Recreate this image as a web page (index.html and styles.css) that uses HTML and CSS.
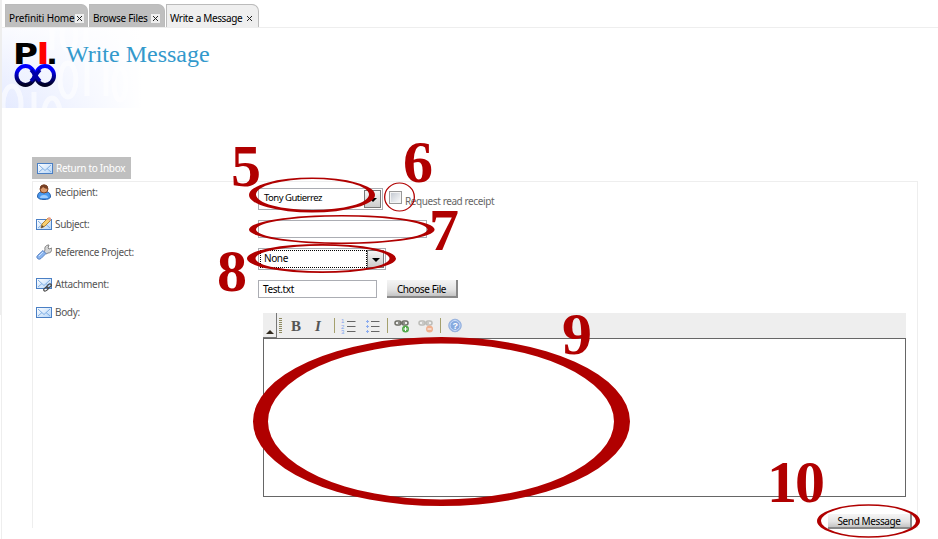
FILE: index.html
```html
<!DOCTYPE html>
<html lang="en">
<head>
<meta charset="utf-8">
<title>Write a Message</title>
<link rel="stylesheet" href="styles.css">
</head>
<body>
<svg class="defs" width="0" height="0">
  <defs>
    <linearGradient id="sky" x1="0" y1="0" x2="1" y2="1"><stop offset="0" stop-color="#fff"/><stop offset="1" stop-color="#b5d5f8"/></linearGradient>
    <linearGradient id="loop" x1="0" y1="0" x2="0" y2="1"><stop offset=".2" stop-color="#00f"/><stop offset="1" stop-color="#000020"/></linearGradient>
    <symbol id="mail" viewBox="0 0 16 16"><rect x=".5" y="3.5" width="15" height="10" fill="url(#sky)" stroke="#4a7fc4"/><path d="M2 5l6 5.5L14 5M2 12l4-3.5M14 12l-4-3.5" fill="none" stroke="#80afe4"/></symbol>
  </defs>
</svg>
<div class="window">
  <nav class="tabs">
    <div class="tab home"><span>Prefiniti Home</span><svg class="close" viewBox="0 0 9 9"><path d="M2 2l5 5M7 2L2 7"/></svg></div>
    <div class="tab files"><span>Browse Files</span><svg class="close" viewBox="0 0 9 9"><path d="M2 2l5 5M7 2L2 7"/></svg></div>
    <div class="tab active"><span>Write a Message</span><svg class="close" viewBox="0 0 9 9"><path d="M2 2l5 5M7 2L2 7"/></svg></div>
  </nav>
  <header class="banner">
    <svg class="binary" width="150" height="80" viewBox="0 0 150 80"><g fill="none" stroke="#fff" stroke-width="5"><ellipse cx="66" cy="52" rx="8" ry="17"/><path d="M85 34v34M104 34v34"/><ellipse cx="118" cy="56" rx="6" ry="16"/><ellipse cx="10" cy="76" rx="9" ry="18"/><path d="M32 64v20"/><ellipse cx="50" cy="86" rx="8" ry="16"/><path d="M50 0v22M84 0v24"/><ellipse cx="67" cy="8" rx="7" ry="14"/></g></svg>
    <svg class="logo" width="44" height="50" viewBox="0 0 44 50">
      <g class="logo-text"><text x="-1" y="22.500" textLength="25" lengthAdjust="spacingAndGlyphs">P</text><text class="red" x="22.500" y="22.500" textLength="13" lengthAdjust="spacingAndGlyphs">l</text><text x="32" y="22.500" textLength="12" lengthAdjust="spacingAndGlyphs">.</text></g>
      <g fill="none" stroke="url(#loop)" stroke-width="4"><ellipse cx="11.500" cy="34.500" rx="9" ry="9.500"/><ellipse cx="31" cy="34.500" rx="9" ry="9.500"/></g>
      <path d="M17 29l9 11M26 29l-9 11" stroke="#0000a8" stroke-width="3.500"/>
    </svg>
    <h1>Write Message</h1>
  </header>
  <main>
    <a class="return"><svg width="16" height="16"><use href="#mail"/></svg><span>Return to Inbox</span></a>
    <form class="panel">
      <div class="row r1">
        <div class="label"><svg width="16" height="16" viewBox="0 0 16 16"><path d="M1.5 13q0-5 4-5h5q4 0 4 5-1 2.500-6.500 2.500T1.500 13z" fill="#4898ee" stroke="#295fa8"/><path d="M4 14q0-3 4-3t4 3z" fill="#9dccff"/><circle cx="8" cy="5" r="4" fill="#dc9b6e" stroke="#7b4326"/><path d="M4 5q0-4.500 4-4.500T12 5Q9 5 7 3 6 5 4 5z" fill="#774025"/></svg><span>Recipient:</span></div>
        <div class="control"><div class="select rec"><span>Tony Gutierrez</span><i class="arrow"></i></div><i class="check"></i><span class="receipt">Request read receipt</span></div>
      </div>
      <div class="row r2">
        <div class="label"><svg width="16" height="16" viewBox="0 0 16 16"><use href="#mail"/><path d="M5 12l1-4 6-6 3 2-6 6z" fill="#f8cf70" stroke="#b58435"/><path d="M11 3l2-2 2 1 0 2-1 1z" fill="#e9a388"/><path d="M5 12l1-3 2 2z" fill="#5a4938"/></svg><span>Subject:</span></div>
        <div class="control"><div class="input subject"></div></div>
      </div>
      <div class="row r3">
        <div class="label"><svg width="16" height="16" viewBox="0 0 16 16"><path d="M8 8l1-2q-1-4 3-5l1 0-1 3 1 1 3-1q0 5-4 5l-2 1z" fill="#d5d5d5" stroke="#858585"/><path d="M7 6.500l3 3-5 5q-2 1.500-3.500 0t0-3z" fill="#8ab5ee" stroke="#5c84c5"/><path d="M3 12l4-4" stroke="#d1e4ff"/></svg><span>Reference Project:</span></div>
        <div class="control"><div class="select proj"><span>None</span><i class="arrow"></i></div></div>
      </div>
      <div class="row r4">
        <div class="label"><svg width="16" height="16" viewBox="0 0 16 16"><use href="#mail" y="-1"/><g fill="none" stroke="#444" stroke-width="1.200"><ellipse cx="13" cy="10" rx="2.600" ry="1.500" transform="rotate(-40 13 10)"/><ellipse cx="10" cy="13" rx="2.600" ry="1.500" transform="rotate(-40 10 13)"/></g></svg><span>Attachment:</span></div>
        <div class="control"><div class="input file">Test.txt</div><div class="button choose">Choose File</div></div>
      </div>
      <div class="row r5">
        <div class="label"><svg width="16" height="16"><use href="#mail"/></svg><span>Body:</span></div>
        <div class="control">
          <div class="editor">
            <div class="toolbar">
              <div class="collapse"></div>
              <svg width="210" height="25" viewBox="0 0 210 25">
                <path d="M3.500 5v16" stroke="#8f8b61" stroke-width="3" stroke-dasharray="1 1"/>
                <text class="tool" x="14" y="18">B</text><text class="tool italic" x="38" y="18">I</text>
                <path d="M57.500 5v15M110.500 5v15M163.500 5v15" stroke="#a4a06d"/>
                <path d="M70 8.500h8.500M70 13.500h8.500M70 18.500h8.500M94 8.500h8.500M94 13.500h8.500M94 18.500h8.500" stroke="#666"/>
                <g class="nums"><text x="64" y="10">1</text><text x="64" y="15.500">2</text><text x="64" y="21">3</text></g>
                <path d="M89 8.500h3M90.500 7v3M89 13.500h3M90.500 12v3M89 18.500h3M90.500 17v3" stroke="#8cacef"/>
                <g fill="none" stroke="#6f6f67" stroke-width="1.500"><rect x="118" y="8" width="6" height="4" rx="2"/><rect x="125" y="8" width="6" height="4" rx="2"/><path d="M121 10h7"/></g><circle cx="128.500" cy="16" r="3.500" fill="#54a94b"/><path d="M126.500 16h4M128.500 14v4" stroke="#fff"/>
                <g fill="none" stroke="#bcbcb8" stroke-width="1.500"><rect x="142" y="8" width="6" height="4" rx="2"/><rect x="149" y="8" width="6" height="4" rx="2"/><path d="M145 10h7"/></g><circle cx="152.500" cy="16" r="3.500" fill="#efb08f"/><path d="M150.500 16h4" stroke="#fff"/>
                <circle cx="178" cy="12.500" r="6.300" fill="#86a9df" stroke="#9bb5df"/><circle cx="178" cy="12.500" r="5" fill="none" stroke="#e0ebff" stroke-width=".8"/><text class="help" x="175.500" y="16">?</text>
              </svg>
            </div>
            <div class="canvas"></div>
          </div>
        </div>
      </div>
      <div class="actions"><div class="button send">Send Message</div></div>
    </form>
  </main>
</div>
<svg class="notes" width="938" height="539" viewBox="0 0 938 539">
  <g fill-rule="evenodd">
    <path d="M249 195a63 17.500 0 1 0 126 0a63 17.500 0 1 0-126 0zM256 194.500a56.500 15.500 0 1 0 113 0a56.500 15.500 0 1 0-113 0z"/>
    <path d="M384 197a15.500 14.500 0 1 0 31 0a15.500 14.500 0 1 0-31 0zM385.300 197a14.200 13.500 0 1 0 28.400 0a14.200 13.500 0 1 0-28.400 0z"/>
    <path d="M249 229.500a92.800 14.500 0 1 0 185.600 0a92.800 14.500 0 1 0-185.600 0zM256 229.500a85.700 13 0 1 0 171.400 0a85.700 13 0 1 0-171.400 0z"/>
    <path d="M247 258.500a74.500 14.500 0 1 0 149 0a74.500 14.500 0 1 0-149 0zM255.500 258.500a67 12.800 0 1 0 134 0a67 12.800 0 1 0-134 0z"/>
    <path d="M253 421.500a188.500 84.500 0 1 0 377 0a188.500 84.500 0 1 0-377 0zM268 421.500a173 78 0 1 0 346 0a173 78 0 1 0-346 0z"/>
    <path d="M817 521a51.500 16.700 0 1 0 103 0a51.500 16.700 0 1 0-103 0zM821 521a47.500 15.300 0 1 0 95 0a47.500 15.300 0 1 0-95 0z"/>
  </g>
  <text x="231" y="186">5</text><text x="403" y="182">6</text><text x="429" y="250">7</text><text x="217" y="291">8</text><text x="562" y="354">9</text><text x="767" y="502" textLength="58">10</text>
</svg>
</body>
</html>
```
FILE: styles.css
```css
* { box-sizing: border-box; }
body { margin: 0; width: 938px; height: 539px; overflow: hidden; position: relative; background: #fff; color: #555; font: 10px/14px "Noto Sans", sans-serif; }
svg { flex: none; }
.defs { position: absolute; }
.window { height: 539px; padding-left: 2px; background: linear-gradient(90deg, #eee 2px, transparent 2px) 0 0 / 100% 315px no-repeat, linear-gradient(90deg, transparent 1px, #eee 1px, #eee 2px, transparent 2px); display: flex; flex-direction: column; }
.tabs { height: 28px; padding: 4px 0 0 3px; display: flex; gap: 1px; border-bottom: 1px solid #eee; flex: none; }
.tab { display: flex; align-items: center; justify-content: space-between; height: 23px; padding: 4px 4px 0 3px; border: 1px solid #bbb; border-bottom: 0; border-radius: 0 7px 0 0; background: #bfbfbf; color: #000; white-space: nowrap; letter-spacing: -.15px; }
.home { width: 83px; }
.files { width: 76px; letter-spacing: -.28px; }
.active { width: 93px; background: #efefef; letter-spacing: -.35px; }
.close { width: 9px; height: 9px; background: #eee; fill: none; stroke: #222; stroke-width: 1; }
.banner { position: relative; height: 80px; flex: none; display: flex; padding: 13px 0 0 12px; background: linear-gradient(90deg, transparent 0, #fff 140px), linear-gradient(180deg, #fafbff, #e4eaff); }
.binary { position: absolute; left: 0; top: 0; opacity: .6; }
.logo { position: relative; overflow: visible; }
.logo-text { font: bold 28px "DejaVu Sans", sans-serif; fill: #000; }
.logo-text .red { fill: #f00; }
h1 { position: relative; margin: -1px 0 0 8px; font: 24px/28px "Liberation Serif", serif; color: #3399cc; }
main { padding: 49px 20px 0 30px; }
.return { width: 99px; height: 22px; display: flex; align-items: center; gap: 3px; padding-left: 5px; background: #bfbfbf; color: #fff; white-space: nowrap; }
.return span { letter-spacing: -.3px; }
.panel { margin-top: 2px; height: 347px; border: 1px solid #eee; border-bottom: 0; }
.row { display: grid; grid-template-columns: 225px 1fr; }
.r1, .r3 { height: 32px; }
.r2, .r4 { height: 28px; }
.r5 { height: 206px; }
.label { display: flex; align-items: flex-start; gap: 3px; padding: 2px 0 0 3px; }
.label span { line-height: 16px; letter-spacing: -.35px; }
.control { display: flex; align-items: flex-start; padding-top: 6px; }
.input, .select { border: 1px solid #abadb3; background: #fff; color: #000; letter-spacing: -.4px; }
.select { height: 22px; display: flex; justify-content: space-between; padding: 1px; }
.select span { padding-left: 4px; line-height: 16px; }
.rec { width: 125px; }
.rec span { font-size: 9.5px; letter-spacing: -.5px; }
.proj { width: 128px; }
.proj span { flex: 1; border: 1px dotted #000; padding-left: 3px; line-height: 14px; }
.arrow { width: 17px; height: 18px; border: 1px solid #777; background: linear-gradient(#f5f5f5, #ccc); display: grid; place-items: center; }
.arrow::after { content: ""; border: 4px solid transparent; border-top-color: #000; border-bottom: 0; margin-top: 2px; }
.check { width: 13px; height: 13px; margin: 3px 0 0 6px; border: 1px solid #999; background: linear-gradient(135deg, #bfc5ce, #fff); box-shadow: inset 0 0 0 1px #f4f4f4; }
.receipt { margin: 6px 0 0 3px; color: #666; letter-spacing: -.4px; }
.subject { width: 169px; height: 18px; }
.file { width: 119px; height: 18px; padding-left: 4px; line-height: 16px; }
.button { background: linear-gradient(#f5f5f5, #e3e3e3 60%, #c4c4c4); border: solid #888; border-width: 0 2px 2px 0; color: #000; text-align: center; letter-spacing: -.4px; }
.choose { width: 71px; height: 18px; margin-left: 10px; line-height: 18px; }
.editor { width: 643px; margin: 5px 0 0 5px; }
.toolbar { height: 25px; background: #eee; display: flex; }
.collapse { width: 14px; border: solid #777; border-width: 0 1px 1px 0; display: flex; align-items: flex-end; justify-content: center; padding-bottom: 3px; }
.collapse::after { content: ""; border: 4px solid transparent; border-bottom-color: #332c20; border-top: 0; }
.canvas { height: 159px; border: 1px solid #666; }
.tool { font: bold 15px "Liberation Serif", serif; fill: #555; }
.italic { font-style: italic; }
.nums text { font: 6px "Liberation Sans", sans-serif; fill: #7fa3ed; }
.help { font: bold 9px "Liberation Sans", sans-serif; fill: #fff; }
.actions { display: flex; justify-content: flex-end; padding: 6px 5px 0 0; }
.send { width: 84px; height: 15px; line-height: 15px; }
.notes { position: absolute; left: 0; top: 0; fill: #b00000; font: bold 60px "Liberation Serif", serif; }
```
